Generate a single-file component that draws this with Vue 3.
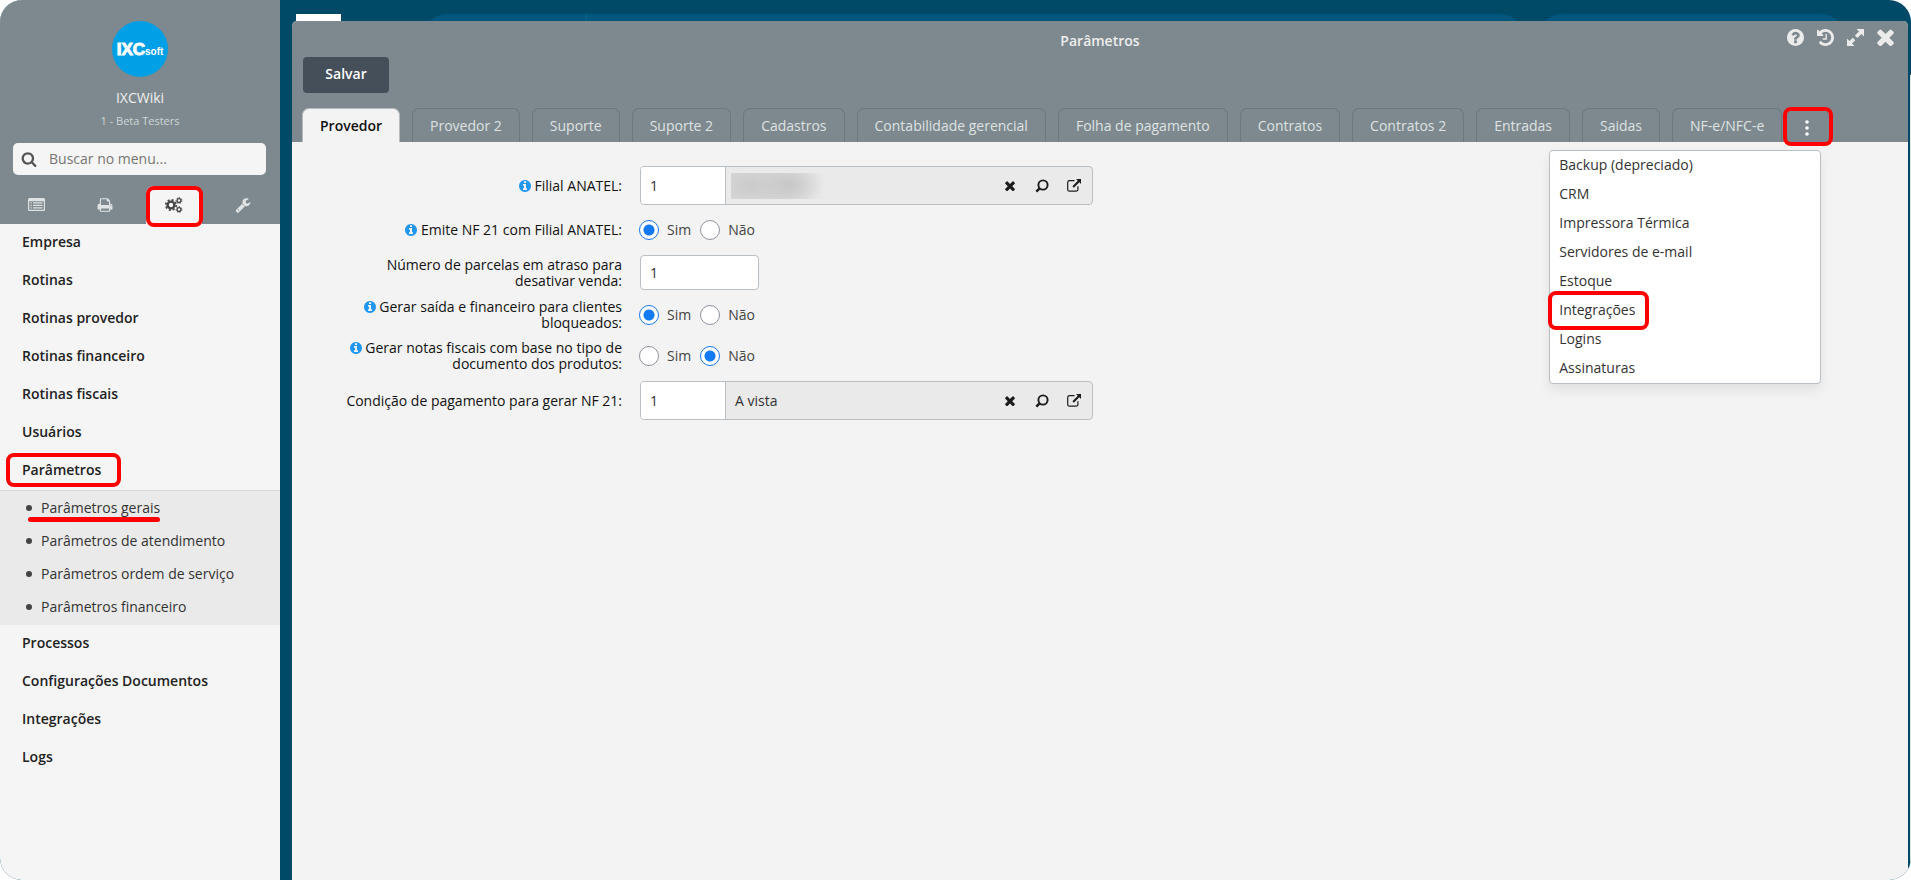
<script setup>
import { ref } from 'vue'

const disc = 'm640 416q0 209-103 385.5t-279.5 279.5-385.5 103-385.5-103-279.5-279.5-103-385.5 103-385.5 279.5-279.5 385.5-103 385.5 103 279.5 279.5 103 385.5z'
const icons = {
  search: 'M1216 832q0-185-131.5-316.5t-316.5-131.5-316.5 131.5-131.5 316.5 131.5 316.5 316.5 131.5 316.5-131.5 131.5-316.5zm512 832q0 52-38 90t-90 38q-54 0-90-38l-343-342q-179 124-399 124-143 0-273.5-55.5t-225-150-150-225-55.5-273.5 55.5-273.5 150-225 225-150 273.5-55.5 273.5 55.5 225 150 150 225 55.5 273.5q0 220-124 399l343 343q37 37 37 90z',
  times: 'M1490 1322q0 40-28 68l-136 136q-28 28-68 28t-68-28l-294-294-294 294q-28 28-68 28t-68-28l-136-136q-28-28-28-68t28-68l294-294-294-294q-28-28-28-68t28-68l136-136q28-28 68-28t68 28l294 294 294-294q28-28 68-28t68 28l136 136q28 28 28 68t-28 68l-294 294 294 294q28 28 28 68z',
  help: 'M1024 1376v-192q0-14-9-23t-23-9h-192q-14 0-23 9t-9 23v192q0 14 9 23t23 9h192q14 0 23-9t9-23zm256-672q0-88-55.5-163t-138.5-116-170-41q-243 0-371 213-15 24 8 42l132 100q7 6 19 6 16 0 25-12 53-68 86-92 34-24 86-24 48 0 85.5 26t37.5 59q0 38-20 61t-68 45q-63 28-115.5 86.5t-52.5 125.5v36q0 14 9 23t23 9h192q14 0 23-9t9-23q0-19 21.5-49.5t54.5-49.5q32-18 49-28.5t46-35 44.5-48 28-60.5 12.5-81zm384 192q0 209-103 385.5t-279.5 279.5-385.5 103-385.5-103-279.5-279.5-103-385.5 103-385.5 279.5-279.5 385.5-103 385.5 103 279.5 279.5 103 385.5z',
  info: 'M1152 1376v-160q0-14-9-23t-23-9h-96v-512q0-14-9-23t-23-9h-320q-14 0-23 9t-9 23v160q0 14 9 23t23 9h96v320h-96q-14 0-23 9t-9 23v160q0 14 9 23t23 9h448q14 0 23-9t9-23zm-128-896v-160q0-14-9-23t-23-9h-192q-14 0-23 9t-9 23v160q0 14 9 23t23 9h192q14 0 23-9t9-23z' + disc,
  history: 'M1664 896q0 156-61 298t-164 245-245 164-298 61q-172 0-327-72.5t-264-204.5q-7-10-6.5-22.5t8.5-20.5l137-138q10-9 25-9 16 2 23 12 73 95 179 147t225 52q104 0 198.5-40.5t163.5-109.5 109.5-163.5 40.5-198.5-40.5-198.5-109.5-163.5-163.5-109.5-198.5-40.5q-98 0-188 35.5t-160 101.5l137 138q31 30 14 69-17 40-59 40h-448q-26 0-45-19t-19-45v-448q0-42 40-59 39-17 69 14l130 129q107-101 244.5-156.5t284.5-55.5q156 0 298 61t245 164 164 245 61 298zm-640-288v448q0 14-9 23t-23 9h-320q-14 0-23-9t-9-23v-64q0-14 9-23t23-9h224v-352q0-14 9-23t23-9h64q14 0 23 9t9 23z',
  print: 'M448 1536h896v-256h-896v256zm0-640h896v-384h-160q-40 0-68-28t-28-68v-160h-640v640zm1152 64q0-26-19-45t-45-19-45 19-19 45 19 45 45 19 45-19 19-45zm128 0v416q0 13-9.5 22.5t-22.5 9.5h-224v160q0 40-28 68t-68 28h-960q-40 0-68-28t-28-68v-160h-224q-13 0-22.5-9.5t-9.5-22.5v-416q0-79 56.5-135.5t135.5-56.5h64v-544q0-40 28-68t68-28h672q40 0 88 20t76 48l152 152q28 28 48 76t20 88v256h64q79 0 135.5 56.5t56.5 135.5z',
  wrench: 'M448 1472q0-26-19-45t-45-19-45 19-19 45 19 45 45 19 45-19 19-45zm644-420l-682 682q-37 37-90 37-52 0-91-37l-106-108q-38-36-38-90 0-53 38-91l681-681q39 98 114.5 173.5t173.5 114.5zm634-435q0 39-23 106-47 134-164.5 217.5t-258.5 83.5q-185 0-316.5-131.5t-131.5-316.5 131.5-316.5 316.5-131.5q58 0 121.5 16.5t107.5 46.5q16 11 16 28t-16 28l-293 169v224l193 107q5-3 79-48.5t135.5-81 70.5-35.5q15 0 23.5 10t8.5 25z',
}

const menu = [
  { label: 'Empresa' },
  { label: 'Rotinas' },
  { label: 'Rotinas provedor' },
  { label: 'Rotinas financeiro' },
  { label: 'Rotinas fiscais' },
  { label: 'Usuários' },
  {
    label: 'Parâmetros',
    marked: true,
    children: [
      'Parâmetros gerais',
      'Parâmetros de atendimento',
      'Parâmetros ordem de serviço',
      'Parâmetros financeiro',
    ],
  },
  { label: 'Processos' },
  { label: 'Configurações Documentos' },
  { label: 'Integrações' },
  { label: 'Logs' },
]

const tabs = [
  'Provedor', 'Provedor 2', 'Suporte', 'Suporte 2', 'Cadastros', 'Contabilidade gerencial',
  'Folha de pagamento', 'Contratos', 'Contratos 2', 'Entradas', 'Saidas', 'NF-e/NFC-e',
]
const activeTab = ref('Provedor')

const moreTabs = [
  'Backup (depreciado)', 'CRM', 'Impressora Térmica', 'Servidores de e-mail',
  'Estoque', 'Integrações', 'Logins', 'Assinaturas',
]
const moreOpen = ref(true)

const fields = ref([
  { id: 'filial', type: 'lookup', info: true, label: 'Filial ANATEL:', value: '1', text: '' },
  { id: 'nf21', type: 'radio', info: true, label: 'Emite NF 21 com Filial ANATEL:', value: 'Sim' },
  { id: 'parcelas', type: 'text', info: false, label: 'Número de parcelas em atraso para desativar venda:', value: '1' },
  { id: 'saida', type: 'radio', info: true, label: 'Gerar saída e financeiro para clientes bloqueados:', value: 'Sim' },
  { id: 'notas', type: 'radio', info: true, label: 'Gerar notas fiscais com base no tipo de documento dos produtos:', value: 'Não' },
  { id: 'condicao', type: 'lookup', info: false, label: 'Condição de pagamento para gerar NF 21:', value: '1', text: 'A vista' },
])
</script>

<template>
  <div class="app">
    <aside class="sidebar">
      <header class="profile">
        <div class="logo"><span class="logo-main">IXC</span><span class="logo-sub">soft</span></div>
        <div class="user">IXCWiki</div>
        <div class="branch">1 - Beta Testers</div>
        <label class="search">
          <svg viewBox="0 0 1792 1792" aria-hidden="true"><path :d="icons.search" /></svg>
          <input type="search" placeholder="Buscar no menu..." aria-label="Buscar no menu" />
        </label>
        <div class="modes">
          <button type="button" aria-label="Cadastros">
            <svg viewBox="0 0 17 14" class="i17">
              <path fill-rule="evenodd" d="M1.500 0h14a1.500 1.500 0 0 1 1.500 1.500v10a1.500 1.500 0 0 1-1.500 1.500h-14a1.500 1.500 0 0 1-1.500-1.500v-10a1.500 1.500 0 0 1 1.500-1.500zM1.200 3.200v8.100a.5.5 0 0 0 .5.5h13.600a.5.5 0 0 0 .5-.5v-8.100z" />
              <path d="M2.500 4.300h1.300v1.200h-1.300zM5 4.300h9.500v1.200h-9.500zM2.500 6.800h1.300v1.200h-1.300zM5 6.800h9.500v1.200h-9.500zM2.500 9.300h1.300v1.200h-1.300zM5 9.300h9.500v1.200h-9.500z" />
            </svg>
          </button>
          <button type="button" aria-label="Relatórios">
            <svg viewBox="0 0 1792 1792" class="i16"><path :d="icons.print" /></svg>
          </button>
          <button type="button" class="active" aria-label="Configurações">
            <svg viewBox="0 0 18 16" class="i18">
              <g fill="none" stroke="currentColor">
                <circle cx="6" cy="8" r="3.400" stroke-width="2.400" />
                <circle cx="6" cy="8" r="5.200" stroke-width="1.700" stroke-dasharray="2.040 2.040" />
                <circle cx="14" cy="3.500" r="1.900" stroke-width="1.300" />
                <circle cx="14" cy="3.500" r="2.900" stroke-width="1" stroke-dasharray="1.300 1.300" />
                <circle cx="14" cy="12.500" r="1.900" stroke-width="1.300" />
                <circle cx="14" cy="12.500" r="2.900" stroke-width="1" stroke-dasharray="1.300 1.300" />
              </g>
            </svg>
            <span class="mark mark-mode"></span>
          </button>
          <button type="button" aria-label="Ferramentas">
            <svg viewBox="0 0 1792 1792" class="i16"><path :d="icons.wrench" /></svg>
          </button>
        </div>
      </header>

      <nav>
        <ul class="menu">
          <li v-for="item in menu" :key="item.label">
            <a href="#" class="menu-link">{{ item.label }}<span v-if="item.marked" class="mark mark-menu"></span></a>
            <ul v-if="item.children" class="submenu">
              <li v-for="(child, i) in item.children" :key="child">
                <a href="#"><span class="sub-text">{{ child }}<span v-if="i === 0" class="underline"></span></span></a>
              </li>
            </ul>
          </li>
        </ul>
      </nav>
    </aside>

    <main class="desk">
      <div class="backdrop">
        <span class="back-logo"></span>
        <span class="pill pill-main"><i></i></span>
        <span class="pill pill-side"></span>
      </div>
      <span class="back-edge"></span>

      <section class="window">
        <header class="window-head">
          <h1>Parâmetros</h1>
          <div class="tools">
            <button type="button" aria-label="Ajuda"><svg viewBox="128 128 1536 1536"><path :d="icons.help" /></svg></button>
            <button type="button" aria-label="Histórico"><svg viewBox="128 128 1536 1536"><path :d="icons.history" /></svg></button>
            <button type="button" aria-label="Expandir">
              <svg viewBox="0 0 17 17">
                <path d="M9.500 0h7.500v7.500l-2.500-2.500-4.100 4.100-2.500-2.500 4.100-4.100zM0 9.500l2.500 2.500 3.300-3.300 2.500 2.500-3.300 3.300 2.500 2.500h-7.500z" />
              </svg>
            </button>
            <button type="button" aria-label="Fechar"><svg viewBox="290 330 1210 1210"><path :d="icons.times" /></svg></button>
          </div>
          <button type="button" class="save">Salvar</button>
          <div class="tab-row">
            <div class="tabs" role="tablist">
              <button
                v-for="tab in tabs"
                :key="tab"
                type="button"
                role="tab"
                class="tab"
                :class="{ current: tab === activeTab }"
                :aria-selected="tab === activeTab"
                @click="activeTab = tab"
              >{{ tab }}</button>
            </div>
            <div class="more">
              <button type="button" class="kebab" aria-label="Mais abas" @click="moreOpen = !moreOpen">
                <svg viewBox="0 0 4 16"><circle cx="2" cy="2" r="1.800" /><circle cx="2" cy="8" r="1.800" /><circle cx="2" cy="14" r="1.800" /></svg>
              </button>
              <span class="mark mark-more"></span>
              <ul v-if="moreOpen" class="dropdown">
                <li v-for="item in moreTabs" :key="item">
                  <a href="#">{{ item }}</a>
                  <span v-if="item === 'Integrações'" class="mark mark-item"></span>
                </li>
              </ul>
            </div>
          </div>
        </header>

        <form class="form" @submit.prevent>
          <div v-for="f in fields" :key="f.id" class="row">
            <component :is="f.type === 'radio' ? 'span' : 'label'" :id="f.id + '-label'" class="label" :for="f.type === 'radio' ? null : f.id">
              <svg v-if="f.info" viewBox="128 128 1536 1536" aria-hidden="true"><path :d="icons.info" /></svg>
              {{ f.label }}
            </component>

            <div v-if="f.type === 'lookup'" class="lookup">
              <input :id="f.id" v-model="f.value" type="text" />
              <div class="lookup-text"><span v-if="f.text">{{ f.text }}</span><span v-else class="redacted"></span></div>
              <button type="button" aria-label="Limpar"><svg class="i10" viewBox="290 330 1210 1210"><path :d="icons.times" /></svg></button>
              <button type="button" aria-label="Pesquisar">
                <svg class="i14" viewBox="0 0 14 14"><g fill="none" stroke="currentColor"><circle cx="8" cy="6" r="4.600" stroke-width="1.900" /><path d="M4.600 9.300l-3.300 3.400" stroke-width="2.400" /></g></svg>
              </button>
              <button type="button" aria-label="Abrir">
                <svg class="i14" viewBox="0 0 14 14"><path d="M7.500 1.600h-5a1.800 1.800 0 0 0-1.800 1.800v7a1.800 1.800 0 0 0 1.800 1.800h6.600a1.800 1.800 0 0 0 1.800-1.800v-3.200" fill="none" stroke="currentColor" stroke-width="1.200" /><path d="M9 0h5v5l-1.700-1.700-5.400 5.400-1.500-1.500 5.400-5.400z" /></svg>
              </button>
            </div>

            <input v-else-if="f.type === 'text'" :id="f.id" v-model="f.value" class="short" type="text" />

            <div v-else class="radios" role="radiogroup" :aria-labelledby="f.id + '-label'">
              <label v-for="opt in ['Sim', 'Não']" :key="opt">
                <input v-model="f.value" type="radio" :name="f.id" :value="opt" />{{ opt }}
              </label>
            </div>
          </div>
        </form>
      </section>
    </main>
  </div>
</template>

<style>
body {
  margin: 0;
  background: #fff;
}
</style>

<style scoped>
.app,
.app * {
  box-sizing: border-box;
}
.app {
  display: flex;
  min-height: 100vh;
  overflow: hidden;
  border-radius: 22px;
  background: #004967;
  color: #333;
  font: 14px/20px "Open Sans", "Noto Sans", sans-serif;
}
button,
input {
  margin: 0;
  padding: 0;
  border: 0;
  background: none;
  color: inherit;
  font: inherit;
}
button {
  display: flex;
  align-items: center;
  justify-content: center;
  cursor: pointer;
}
svg {
  display: block;
  fill: currentColor;
}
ul {
  margin: 0;
  padding: 0;
  list-style: none;
}
a {
  color: inherit;
  text-decoration: none;
}
.i10 { width: 10px; height: 10px; }
.i14 { width: 14px; height: 14px; }
.i16 { width: 16px; height: 16px; }
.i17 { width: 17px; height: 14px; }
.i18 { width: 18px; height: 16px; }

.mark {
  position: absolute;
  border: 4px solid #f00;
  border-radius: 8px;
  pointer-events: none;
}

/* sidebar */
.sidebar {
  flex: 0 0 280px;
  background: #f5f5f5;
}
.profile {
  display: flex;
  flex-direction: column;
  align-items: center;
  padding-top: 21px;
  background: #7d898e;
  color: #f0f0f0;
}
.logo {
  display: flex;
  align-items: baseline;
  justify-content: center;
  width: 56px;
  height: 56px;
  border-radius: 50%;
  background: #00a0e6;
  color: #fff;
  font-family: "Liberation Sans", Arial, sans-serif;
  font-weight: 700;
  line-height: 58px;
}
.logo-main {
  font-size: 17px;
  -webkit-text-stroke: 1px #fff;
}
.logo-sub {
  font-size: 10px;
}
.user {
  margin-top: 11px;
}
.branch {
  margin-top: 5px;
  color: #d0d5d7;
  font-size: 11px;
  line-height: 16px;
}
.search {
  display: flex;
  align-items: center;
  align-self: stretch;
  gap: 12px;
  height: 32px;
  margin: 14px 14px 0 13px;
  padding: 0 8px 1px;
  border-radius: 5px;
  background: #f5f5f5;
  color: #666;
}
.search svg {
  width: 16px;
  height: 16px;
  color: #555;
}
.search input {
  flex: 1;
  min-width: 0;
  outline: 0;
}
.search input::placeholder {
  color: #757575;
  opacity: 1;
}
.modes {
  display: flex;
  align-self: stretch;
  justify-content: flex-start;
  gap: 13px;
  margin-top: 11px;
  padding: 0 8px;
}
.modes button {
  position: relative;
  width: 56px;
  height: 38px;
  color: #e0e3e4;
}
.modes .active {
  border-radius: 8px 8px 0 0;
  background: #f5f5f5;
  color: #444;
}
.mark-mode {
  inset: 0 -1px -3px 0;
}
.menu-link {
  position: relative;
  display: block;
  padding: 8px 22px 10px;
  color: #222;
  font-weight: 600;
}
.mark-menu {
  top: 1px;
  bottom: 3px;
  left: 6px;
  width: 115px;
}
.submenu {
  padding-bottom: 2px;
  border-top: 1px solid #d8d8d8;
  background: #eaeaea;
}
.submenu a {
  display: flex;
  align-items: center;
  gap: 9px;
  height: 33px;
  padding-left: 26px;
}
.submenu a::before {
  width: 6px;
  height: 6px;
  border-radius: 50%;
  background: #444;
  content: "";
}
.sub-text {
  position: relative;
}
.underline {
  position: absolute;
  right: 0;
  bottom: -4px;
  left: -13px;
  height: 5px;
  border-radius: 3px;
  background: #f00;
}

/* desktop behind the window */
.desk {
  position: relative;
  display: flex;
  flex: 1;
  min-width: 0;
}
.backdrop {
  position: absolute;
  inset: 14px 66px auto 16px;
  display: flex;
  height: 48px;
}
.back-logo {
  width: 45px;
  background: #fff;
}
.pill {
  border-radius: 24px;
  background: #00577d;
}
.pill-main {
  flex: 1;
  margin: 0 14px 0 82px;
}
.pill-main i {
  display: block;
  width: 1px;
  height: 48px;
  margin-left: 163px;
  background: #00678f;
}
.pill-side {
  width: 307px;
}
.back-edge {
  position: absolute;
  top: 75px;
  right: 0;
  bottom: 0;
  width: 1px;
  background: #dfe6ea;
}

/* window */
.window {
  position: relative;
  display: flex;
  flex: 1;
  flex-direction: column;
  min-width: 0;
  margin: 21px 3px 0 12px;
  border-radius: 5px 5px 0 0;
  background: #f3f3f3;
}
.window-head {
  padding: 10px 10px 0;
  border-radius: 5px 5px 0 0;
  background: #7d898e;
}
h1 {
  margin: 0;
  color: #eee;
  font-size: 14px;
  font-weight: 600;
  line-height: 20px;
  text-align: center;
}
.tools {
  position: absolute;
  top: 8px;
  right: 14px;
  display: flex;
  gap: 13px;
  color: #ebebeb;
}
.tools svg {
  width: 17px;
  height: 17px;
}
.save {
  width: 86px;
  height: 36px;
  margin: 6px 0 15px 1px;
  padding-bottom: 2px;
  border-radius: 4px;
  background: #454f5a;
  color: #fff;
  font-weight: 600;
}
.tab-row {
  display: flex;
}
.tabs {
  display: flex;
  gap: 12px;
}
.tab {
  height: 34px;
  padding: 0 17px;
  border: 1px solid #6b787d;
  border-bottom: 0;
  border-radius: 7px 7px 0 0;
  color: #dfe2e3;
  white-space: nowrap;
}
.tab.current {
  border-color: #b5bbbe;
  background: #f3f3f3;
  color: #111;
  font-weight: 600;
}
.more {
  position: relative;
  margin-left: 1px;
}
.kebab {
  width: 50px;
  height: 34px;
  padding: 6px 2px 0 0;
  color: #fff;
}
.kebab svg {
  width: 4px;
  height: 16px;
}
.mark-more {
  inset: -1px 0 -4px;
}
.dropdown {
  position: absolute;
  top: 42px;
  right: 12px;
  width: 272px;
  border: 1px solid #b9c0c5;
  border-radius: 4px;
  background: #fff;
  box-shadow: 0 6px 12px rgba(0, 0, 0, 0.08);
}
.dropdown li {
  position: relative;
}
.dropdown a {
  display: block;
  padding: 0 9px 2px;
  line-height: 27px;
}
.mark-item {
  top: -5px;
  bottom: -5px;
  left: -2px;
  width: 101px;
}

/* form */
.form {
  display: flex;
  flex-direction: column;
  gap: 9px;
  padding: 24px 50px;
}
.row {
  display: grid;
  grid-template-columns: 280px 1fr;
  gap: 18px;
  align-items: center;
}
.label {
  color: #111;
  line-height: 16px;
  text-align: right;
}
.label svg {
  display: inline-block;
  width: 12px;
  height: 12px;
  color: #2196f3;
  vertical-align: -1px;
}
.lookup {
  display: flex;
  align-items: center;
  width: 453px;
  height: 39px;
  overflow: hidden;
  border: 1px solid #b9c0c5;
  border-radius: 4px;
  background: #eaeaea;
}
.lookup input {
  align-self: stretch;
  width: 85px;
  padding: 0 9px;
  border-right: 1px solid #b9c0c5;
  background: #fff;
}
.lookup-text {
  flex: 1;
  padding-left: 9px;
}
.redacted {
  display: block;
  width: 96px;
  height: 26px;
  margin-left: -4px;
  background:
    radial-gradient(ellipse 34px 22px at 20px 12px, #cacaca, transparent),
    radial-gradient(ellipse 34px 22px at 58px 12px, #c6c6c6, transparent),
    linear-gradient(90deg, #d8d8d8 50%, #eaeaea);
}
.lookup button {
  width: 32px;
  height: 37px;
  color: #1c1c1c;
}
.lookup button:last-child {
  margin-right: 2px;
}
.short {
  width: 119px;
  height: 35px;
  padding: 0 9px;
  border: 1px solid #b9c0c5;
  border-radius: 4px;
  background: #fff;
}
.radios {
  display: flex;
  gap: 9px;
  height: 32px;
  margin-left: -1px;
}
.radios label {
  display: flex;
  align-items: center;
  gap: 8px;
  color: #444;
}
.radios input {
  width: 20px;
  height: 20px;
  appearance: none;
  border: 1px solid #8d939c;
  border-radius: 50%;
  background: #fff;
}
.radios input:checked {
  border-color: #1677f2;
  background: radial-gradient(circle, #147af3 5px, #fff 6px);
}
</style>
